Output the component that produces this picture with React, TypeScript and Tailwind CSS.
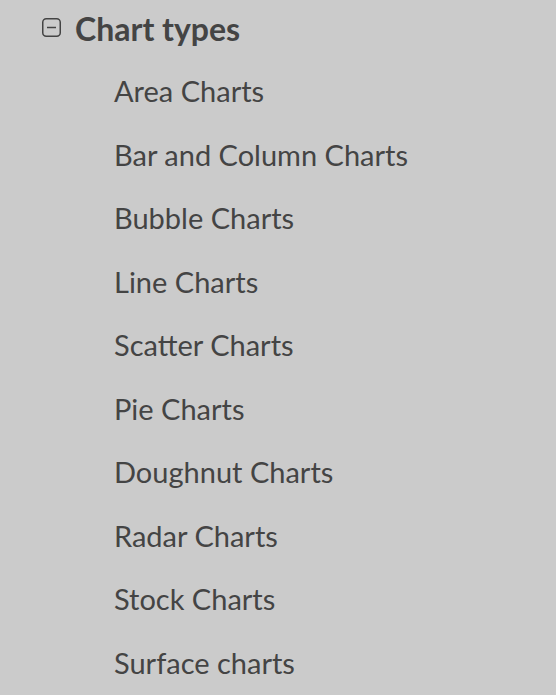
import React from 'react';

const CHART_TYPES = [
  'Area Charts',
  'Bar and Column Charts',
  'Bubble Charts',
  'Line Charts',
  'Scatter Charts',
  'Pie Charts',
  'Doughnut Charts',
  'Radar Charts',
  'Stock Charts',
  'Surface charts',
];

const MinusSquare = () => (
  <svg width="19" height="19" viewBox="0 0 19 19" fill="none" className="shrink-0 -mt-[4px]">
    <rect x="0.75" y="0.75" width="17.5" height="17.5" rx="3.5" stroke="#444444" strokeWidth="1.5" />
    <line x1="5" y1="9.5" x2="14" y2="9.5" stroke="#444444" strokeWidth="1.5" />
  </svg>
);

export default function App() {
  return (
    <div className="w-[556px] h-[695px] bg-[#cbcbcb] text-[#444444] font-['Lato',sans-serif] overflow-hidden">
      <div className="flex items-center gap-[14px] pl-[42px] h-[58px]">
        <MinusSquare />
        <span className="text-[32px] font-bold leading-none">Chart types</span>
      </div>
      <ul className="pl-[114px] pt-[1px]">
        {CHART_TYPES.map((t) => (
          <li key={t} className="h-[63.5px] flex items-center text-[29px] leading-none">
            {t}
          </li>
        ))}
      </ul>
    </div>
  );
}
